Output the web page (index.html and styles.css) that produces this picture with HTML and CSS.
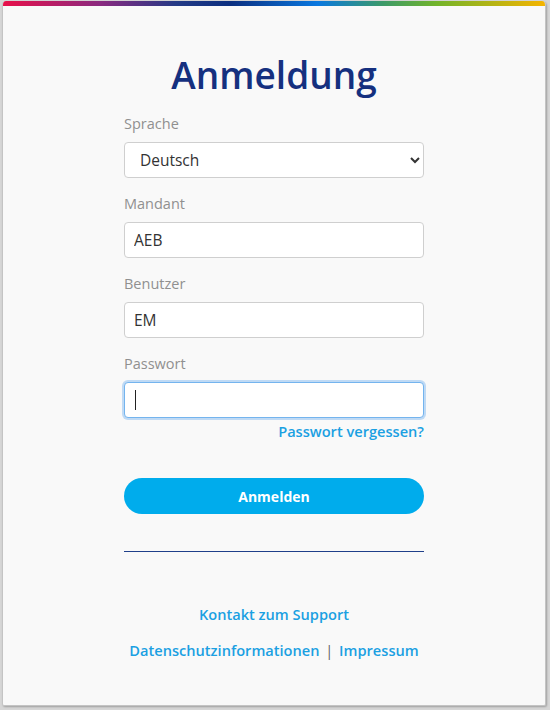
FILE: index.html
```html
<!DOCTYPE html>
<html lang="de">
<head>
	<meta charset="UTF-8">
	<meta name="viewport" content="width=device-width, initial-scale=1.0">
	<title>Anmeldung</title>
	<link rel="stylesheet" href="styles.css">
</head>
<body>
	<div class="card">
		<div class="rainbow"></div>
		<form class="login">
			<h1 class="title">Anmeldung</h1>
			<div class="field">
				<label for="lang">Sprache</label>
				<select id="lang" name="lang">
					<option selected>Deutsch</option>
					<option>English</option>
				</select>
			</div>
			<div class="field">
				<label for="client">Mandant</label>
				<input type="text" id="client" name="client" value="AEB">
			</div>
			<div class="field">
				<label for="user">Benutzer</label>
				<input type="text" id="user" name="user" value="EM">
			</div>
			<div class="field last">
				<label for="pass">Passwort</label>
				<div class="caret-wrap">
					<input type="password" id="pass" name="pass" class="focused">
				</div>
			</div>
			<a href="#" class="forgot">Passwort vergessen?</a>
			<button type="submit" class="submit">Anmelden</button>
			<hr class="divider">
			<div class="links">
				<a href="#">Kontakt zum Support</a>
			</div>
			<div class="links second">
				<a href="#">Datenschutzinformationen</a>
				<span class="sep">|</span>
				<a href="#">Impressum</a>
			</div>
		</form>
	</div>
</body>
</html>
```

FILE: styles.css
```css
html,
body {
	margin: 0;
	height: 100%;
}

body {
	background: #d6d6d6;
	padding: 1px 4px 4px 2px;
	box-sizing: border-box;
	font-family: "Open Sans", "Liberation Sans", sans-serif;
}

.card {
	height: 100%;
	box-sizing: border-box;
	background: #f9f9f9;
	border: 1px solid #c4c4c4;
	border-top: none;
	border-radius: 4px 4px 2px 2px;
	box-shadow: 1px 1px 2px rgba(0, 0, 0, .25);
	overflow: hidden;
}

.rainbow {
	height: 5px;
	background: linear-gradient(to right, #e8104a 0%, #8a2a80 18%, #243a86 32%, #0b2f80 42%, #0a78e0 58%, #3c9a6a 70%, #72b42a 80%, #f5b400 100%);
}

.login {
	width: 300px;
	margin: 0 auto;
	display: flex;
	flex-direction: column;
}

.title {
	margin: 47px 0 17px;
	text-align: center;
	font-size: 37px;
	line-height: 44px;
	font-weight: 600;
	color: #15307f;
}

.field {
	display: flex;
	flex-direction: column;
	margin-bottom: 16px;
}

.field.last {
	margin-bottom: 0;
}

.field label {
	font-size: 14.5px;
	line-height: 20px;
	color: #909090;
	margin-bottom: 8px;
}

.field input,
.field select {
	width: 100%;
	height: 36px;
	box-sizing: border-box;
	border: 1px solid #cfcfcf;
	border-radius: 4px;
	background: #fff;
	font-family: inherit;
	font-size: 15.5px;
	color: #333;
	padding: 0 9px;
	outline: none;
}

.field select {
	padding-left: 11px;
}

.caret-wrap {
	position: relative;
}

.caret-wrap::after {
	content: "";
	position: absolute;
	left: 11px;
	top: 8px;
	width: 1px;
	height: 20px;
	background: #222;
}

.field input.focused {
	border-color: #74b4ee;
	box-shadow: 0 0 0 2px rgba(120, 180, 240, .45);
}

.forgot {
	align-self: flex-end;
	margin-top: 3px;
	font-size: 14.6px;
	line-height: 20px;
	font-weight: 600;
	color: #1ba0e2;
	text-decoration: none;
}

.submit {
	margin-top: 37px;
	height: 36px;
	border: none;
	border-radius: 18px;
	background: #00acec;
	color: #fff;
	font-family: inherit;
	font-size: 14px;
	font-weight: 700;
}

.divider {
	margin: 37px 0 0;
	border: none;
	border-top: 1px solid #20408a;
}

.links {
	margin-top: 52px;
	text-align: center;
	font-size: 14.6px;
	line-height: 20px;
	font-weight: 600;
}

.links.second {
	margin-top: 16px;
}

.links a {
	color: #1ba0e2;
	text-decoration: none;
}

.sep {
	color: #666;
	font-weight: 400;
	margin: 0 2px;
}
```
